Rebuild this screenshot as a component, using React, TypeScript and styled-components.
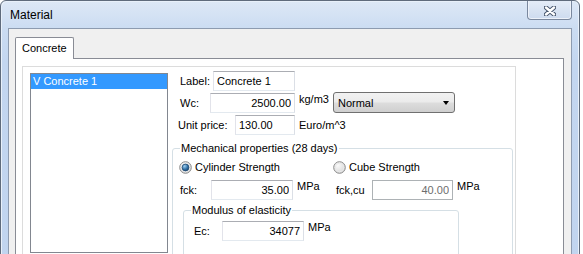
import styled, { createGlobalStyle } from "styled-components";

const GlobalStyle = createGlobalStyle`
  html, body {
    margin: 0;
    padding: 0;
    background: #ffffff;
    overflow: hidden;
  }
  body {
    font-family: "Liberation Sans", Arial, sans-serif;
    font-size: 11px;
    color: #000;
  }
`;

const CloseIcon = () => (
  <svg width="12" height="10" viewBox="0 0 12 10">
    <path d="M2 1.5 L10 8.5 M10 1.5 L2 8.5" stroke="#44536a" strokeWidth="4.4" strokeLinecap="round" />
    <path d="M2 1.5 L10 8.5 M10 1.5 L2 8.5" stroke="#ffffff" strokeWidth="2.4" strokeLinecap="round" />
  </svg>
);

const RadioIcon = ({ checked }: { checked?: boolean }) => (
  <svg width="13" height="13" viewBox="0 0 13 13">
    <defs>
      <radialGradient id="rOuter" cx="0.35" cy="0.3" r="0.8">
        <stop offset="0" stopColor="#fbfbfb" />
        <stop offset="1" stopColor="#d4d4d4" />
      </radialGradient>
      <radialGradient id="rDot" cx="0.35" cy="0.3" r="0.8">
        <stop offset="0" stopColor="#9fd0f2" />
        <stop offset="0.6" stopColor="#2f6ea3" />
        <stop offset="1" stopColor="#173f66" />
      </radialGradient>
    </defs>
    <circle cx="6.5" cy="6.5" r="5.8" fill="url(#rOuter)" stroke="#8b8b8b" strokeWidth="1" />
    <circle cx="6.5" cy="6.5" r="4.2" fill="none" stroke="#e9e9e9" strokeWidth="1" />
    {checked && <circle cx="6.5" cy="6.5" r="3.4" fill="url(#rDot)" stroke="#1f4a73" strokeWidth="0.8" />}
  </svg>
);

export default function App() {
  return (
    <>
      <GlobalStyle />
      <Window>
        <TitleBar>
          <Title>Material</Title>
          <CloseButton>
            <CloseIcon />
          </CloseButton>
        </TitleBar>
        <Client>
          <TabStrip>
            <Tab>Concrete</Tab>
          </TabStrip>
          <TabPanel>
            <InnerPanel>
              <ListBox>
                <ListItem $selected>V Concrete 1</ListItem>
              </ListBox>
              <Form>
                <Row>
                  <Caption $pad={8} $w={41}>Label:</Caption>
                  <TextBox $w={82} readOnly defaultValue="Concrete 1" />
                </Row>
                <Row>
                  <Caption $pad={8} $w={38}>Wc:</Caption>
                  <TextBox $w={85} $right readOnly defaultValue="2500.00" />
                  <Unit $top>kg/m3</Unit>
                  <Combo>
                    <span>Normal</span>
                    <Arrow />
                  </Combo>
                </Row>
                <Row>
                  <Caption $pad={6} $w={63}>Unit price:</Caption>
                  <TextBox $w={60} readOnly defaultValue="130.00" />
                  <Unit>Euro/m^3</Unit>
                </Row>

                <Group $w={341} $mt={5} $h={140}>
                  <Legend>Mechanical properties (28 days)</Legend>
                  <RadioRow>
                    <Radio $w={154}>
                      <RadioIcon checked />
                      <span>Cylinder Strength</span>
                    </Radio>
                    <Radio>
                      <RadioIcon />
                      <span>Cube Strength</span>
                    </Radio>
                  </RadioRow>
                  <Row $mt={6}>
                    <Caption $pad={7} $w={38}>fck:</Caption>
                    <TextBox $w={82} $right readOnly defaultValue="35.00" />
                    <Unit $top $w={39}>MPa</Unit>
                    <Caption $w={36}>fck,cu</Caption>
                    <TextBox $w={81} $right $disabled readOnly defaultValue="40.00" />
                    <Unit $top>MPa</Unit>
                  </Row>
                  <Group $w={276} $mt={4} $ml={10} $h={80}>
                    <Legend>Modulus of elasticity</Legend>
                    <Row $mt={4}>
                      <Caption $pad={10} $w={38}>Ec:</Caption>
                      <TextBox $w={82} $right readOnly defaultValue="34077" />
                      <Unit $top>MPa</Unit>
                    </Row>
                  </Group>
                </Group>
              </Form>
            </InnerPanel>
          </TabPanel>
        </Client>
      </Window>
    </>
  );
}

const Window = styled.div`
  width: 580px;
  height: 320px;
  box-sizing: border-box;
  border: 1px solid #5f6b7c;
  border-radius: 6px 6px 0 0;
  padding: 0 7px;
  display: flex;
  flex-direction: column;
  background: linear-gradient(to bottom, #dde8f6 0px, #cbdcf2 28px, #c3d6f0 60px, #c0d4ef 100%);
  box-shadow: inset 1px 1px 0 #e8f0fa, inset -1px 0 0 #e8f0fa;
`;

const TitleBar = styled.div`
  height: 27px;
  display: flex;
  align-items: flex-start;
  justify-content: space-between;
`;

const Title = styled.div`
  font-size: 12px;
  line-height: 15px;
  padding: 7px 0 0 2px;
  color: #000;
`;

const CloseButton = styled.div`
  width: 45px;
  height: 19px;
  box-sizing: border-box;
  border: 1px solid #7a889e;
  border-top: none;
  border-radius: 0 0 4px 4px;
  background: linear-gradient(to bottom, #e4ecf7, #cddbef);
  box-shadow: inset 0 -1px 0 #edf2fa, inset 1px 0 0 #edf2fa, inset -1px 0 0 #edf2fa;
  display: flex;
  align-items: center;
  justify-content: center;
  padding-top: 1px;
`;

const Client = styled.div`
  flex: 1;
  border: 1px solid #8d9bb0;
  border-bottom: none;
  background: #f0f0f0;
  padding: 8px 7px 0 6px;
  display: flex;
  flex-direction: column;
`;

const TabStrip = styled.div`
  display: flex;
`;

const Tab = styled.div`
  position: relative;
  width: 59px;
  height: 22px;
  box-sizing: border-box;
  margin-bottom: -1px;
  padding: 4px 0 0 6px;
  line-height: 13px;
  background: #ffffff;
  border: 1px solid #898c95;
  border-bottom: none;
  border-radius: 2px 2px 0 0;
`;

const TabPanel = styled.div`
  flex: 1;
  background: #ffffff;
  border: 1px solid #898c95;
  border-bottom: none;
  padding: 7px 0 0 6px;
`;

const InnerPanel = styled.div`
  width: 494px;
  height: 200px;
  box-sizing: border-box;
  border: 1px solid #dcdcdc;
  padding: 6px 0 0 7px;
  display: flex;
  align-items: flex-start;
`;

const ListBox = styled.div`
  width: 138px;
  height: 180px;
  box-sizing: border-box;
  border: 1px solid #828790;
  flex-shrink: 0;
`;

const ListItem = styled.div<{ $selected?: boolean }>`
  height: 15px;
  line-height: 15px;
  padding-left: 2px;
  background: ${(p) => (p.$selected ? "#3399ff" : "transparent")};
  color: ${(p) => (p.$selected ? "#ffffff" : "#000")};
`;

const Form = styled.div`
  margin: -2px 0 0 4px;
  display: flex;
  flex-direction: column;
  gap: 2px;
`;

const Row = styled.div<{ $mt?: number }>`
  display: flex;
  align-items: center;
  height: 20px;
  margin-top: ${(p) => p.$mt ?? 0}px;
`;

const Caption = styled.span<{ $pad?: number; $w: number }>`
  box-sizing: border-box;
  width: ${(p) => p.$w}px;
  padding-left: ${(p) => p.$pad ?? 0}px;
  flex-shrink: 0;
  line-height: 13px;
`;

const TextBox = styled.input<{ $w: number; $right?: boolean; $disabled?: boolean }>`
  width: ${(p) => p.$w}px;
  height: 20px;
  box-sizing: border-box;
  margin: 0;
  padding: 0 3px;
  border: 1px solid;
  border-color: #abadb3 #dbdfe6 #e3e9ef #e2e3ea;
  border-radius: 0;
  outline: none;
  background: #ffffff;
  font-family: "Liberation Sans", Arial, sans-serif;
  font-size: 11px;
  text-align: ${(p) => (p.$right ? "right" : "left")};
  color: ${(p) => (p.$disabled ? "#6d6d6d" : "#000")};
  ${(p) => p.$disabled && "border-color: #adb2b5;"}
`;

const Unit = styled.span<{ $top?: boolean; $w?: number }>`
  align-self: ${(p) => (p.$top ? "flex-start" : "center")};
  margin-left: 4px;
  line-height: 13px;
  ${(p) => p.$w && `width: ${p.$w}px; flex-shrink: 0;`}
`;

const Combo = styled.div`
  width: 122px;
  height: 21px;
  box-sizing: border-box;
  margin: -1px 0 0 4px;
  padding: 0 5px 0 4px;
  border: 1px solid #707070;
  border-radius: 3px;
  background: linear-gradient(to bottom, #f2f2f2 0%, #ebebeb 48%, #dddddd 52%, #cfcfcf 100%);
  display: flex;
  align-items: center;
  justify-content: space-between;
`;

const Arrow = styled.span`
  width: 0;
  height: 0;
  border-left: 3.5px solid transparent;
  border-right: 3.5px solid transparent;
  border-top: 4px solid #000;
  margin-top: 1px;
`;

const Group = styled.fieldset<{ $w: number; $mt?: number; $ml?: number; $h: number }>`
  width: ${(p) => p.$w}px;
  height: ${(p) => p.$h}px;
  box-sizing: border-box;
  margin: ${(p) => p.$mt ?? 0}px 0 0 ${(p) => p.$ml ?? 0}px;
  padding: 0;
  border: 1px solid #d5dfe5;
  border-radius: 3px;
  min-width: 0;
`;

const Legend = styled.legend`
  margin-left: 7px;
  padding: 0 1px;
  line-height: 13px;
`;

const RadioRow = styled.div`
  display: flex;
  align-items: center;
  margin-top: 6px;
  padding-left: 6px;
  height: 13px;
`;

const Radio = styled.label<{ $w?: number }>`
  display: flex;
  align-items: center;
  gap: 3px;
  line-height: 13px;
  ${(p) => p.$w && `width: ${p.$w}px;`}
`;
